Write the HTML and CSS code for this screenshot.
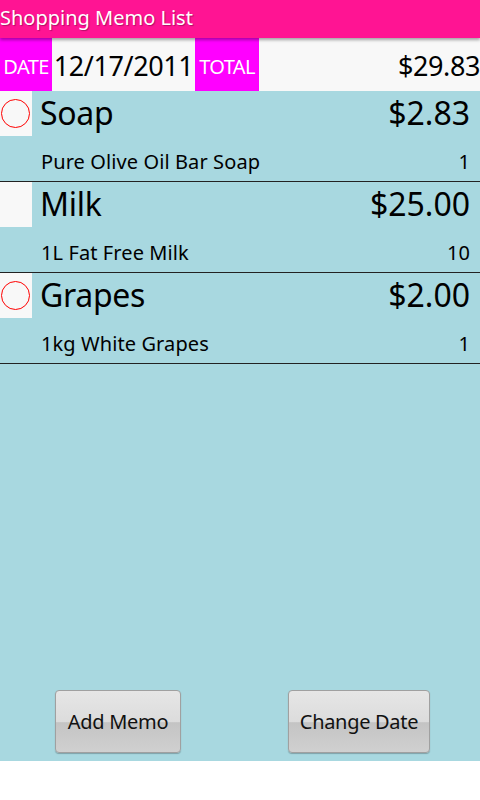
FILE: index.html
```html
<!DOCTYPE html>
<html>
	<head>
		<meta http-equiv="Content-Type" content="text/html; charset=UTF-8">
		<title>Shopping Memo List</title>
		<link rel="stylesheet" href="styles.css">
	</head>
	<body>
		<div class="app">
			<div class="titlebar">Shopping Memo List</div>
			<div class="summary">
				<span class="tag date-tag">DATE</span>
				<span class="date">12/17/2011</span>
				<span class="tag total-tag">TOTAL</span>
				<span class="total">$29.83</span>
			</div>
			<div class="content">
				<div class="list">
					<div class="item">
						<span class="check"><span class="ring"></span></span>
						<span class="name">Soap</span>
						<span class="price">$2.83</span>
						<span class="desc">Pure Olive Oil Bar Soap</span>
						<span class="qty">1</span>
					</div>
					<div class="item">
						<span class="check"></span>
						<span class="name">Milk</span>
						<span class="price">$25.00</span>
						<span class="desc">1L Fat Free Milk</span>
						<span class="qty">10</span>
					</div>
					<div class="item">
						<span class="check"><span class="ring"></span></span>
						<span class="name">Grapes</span>
						<span class="price">$2.00</span>
						<span class="desc">1kg White Grapes</span>
						<span class="qty">1</span>
					</div>
				</div>
				<div class="buttons">
					<button type="button" class="btn memo">Add Memo</button>
					<button type="button" class="btn change">Change Date</button>
				</div>
			</div>
		</div>
	</body>
</html>
```

FILE: styles.css
```css
body {
	margin : 0;
	background-color : #FFFFFF;
	font-family : "Noto Sans", "Open Sans", sans-serif;
}
.app {
	width : 480px;
	display : flex;
	flex-direction : column;
}
.titlebar {
	height : 38px;
	line-height : 36px;
	background-color : #FF1493;
	color : #FFFFFF;
	font-size : 20px;
	text-shadow : 1px 1px 1px rgba(0, 0, 0, 0.3);
	box-shadow : 0 2px 3px rgba(0, 0, 0, 0.35);
	position : relative;
	z-index : 1;
}
.summary {
	display : flex;
	height : 53px;
	align-items : stretch;
	background-color : #F8F8F8;
}
.summary span {
	display : flex;
	align-items : center;
}
.tag {
	background-color : #FF00FF;
	color : #FFFFFF;
	font-size : 20px;
	letter-spacing : -0.6px;
	padding-top : 4px;
	justify-content : center;
}
.date-tag {
	width : 52px;
}
.total-tag {
	width : 64px;
}
.date {
	width : 143px;
	justify-content : center;
	font-size : 27px;
	padding-top : 2px;
	letter-spacing : -0.4px;
}
.total {
	flex : 1;
	justify-content : flex-end;
	font-size : 27px;
	padding-top : 2px;
	letter-spacing : -0.4px;
}
.content {
	height : 670px;
	background-color : #A8D8E0;
	display : flex;
	flex-direction : column;
	justify-content : space-between;
}
.item {
	display : grid;
	grid-template-columns : 32px 1fr auto;
	grid-template-rows : 45px 45px;
	border-bottom : 1px solid #222222;
}
.check {
	background-color : #F8F8F8;
	display : flex;
	align-items : center;
	justify-content : center;
}
.ring {
	width : 27px;
	height : 27px;
	border : 1px solid #FF0000;
	border-radius : 50%;
	margin-left : -2px;
}
.name {
	font-size : 32px;
	padding-left : 8px;
	line-height : 44px;
	letter-spacing : -0.3px;
}
.price {
	font-size : 32px;
	padding-right : 10px;
	line-height : 44px;
	text-align : right;
}
.desc {
	grid-column : 1 / 3;
	font-size : 20px;
	padding-left : 41px;
	line-height : 52px;
	letter-spacing : 0.1px;
}
.qty {
	font-size : 20px;
	padding-right : 10px;
	line-height : 52px;
	text-align : right;
}
.buttons {
	display : flex;
	padding : 0 50px 8px 55px;
	justify-content : space-between;
}
.btn {
	height : 63px;
	font-family : "Noto Sans", "Open Sans", sans-serif;
	font-size : 20px;
	color : #111111;
	border : 1px solid #A0A0A0;
	border-radius : 4px;
	background : linear-gradient(#E6E6E6, #DCDCDC 50%, #C4C4C4 52%, #D0D0D0);
	box-shadow : 0 1px 1px rgba(0, 0, 0, 0.25);
	letter-spacing : -0.3px;
}
.memo {
	width : 126px;
}
.change {
	width : 142px;
}
```
